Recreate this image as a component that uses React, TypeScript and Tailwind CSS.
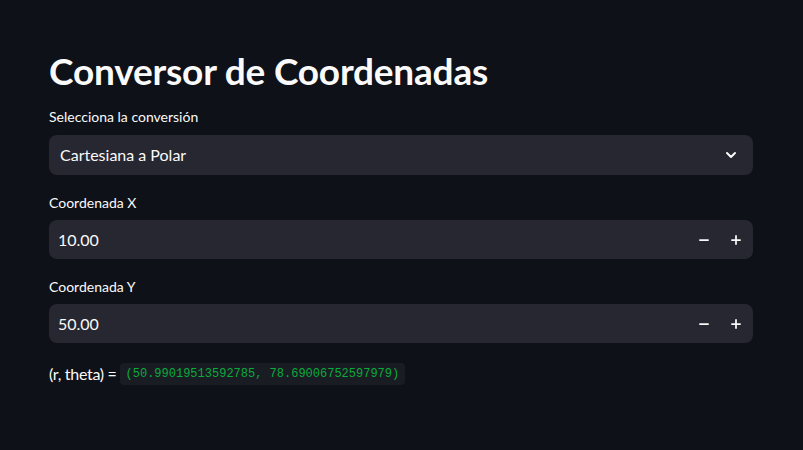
import { ChevronDown, Minus, Plus } from 'lucide-react'

const font = { fontFamily: 'Lato, "Noto Sans", sans-serif' }

function NumberField({ label, value }: { label: string; value: string }) {
  return (
    <div className="flex flex-col">
      <label className="text-[14px] leading-[18px] text-[#fafafa] h-[26px]">{label}</label>
      <div className="flex items-center h-[39px] rounded-lg bg-[#262730]">
        <span className="flex-1 pl-[9px] text-[16px] text-[#fafafa]">{value}</span>
        <button type="button" className="w-8 h-full flex items-center justify-center text-[#fafafa]">
          <Minus className="w-[14px] h-[14px]" strokeWidth={3} />
        </button>
        <button type="button" className="w-8 h-full flex items-center justify-center text-[#fafafa] mr-[1px]">
          <Plus className="w-[14px] h-[14px]" strokeWidth={3} />
        </button>
      </div>
    </div>
  )
}

export default function App() {
  return (
    <div className="w-[803px] h-[450px] bg-[#0e1117] overflow-hidden" style={font}>
      <div className="ml-[49px] mr-[50px] pt-[46px] flex flex-col">
        <h1 className="text-[37px] leading-[50px] font-bold text-[#fafafa] tracking-[-0.2px]">
          Conversor de Coordenadas
        </h1>

        <div className="mt-[12px] flex flex-col">
          <label className="text-[14px] leading-[18px] text-[#fafafa] h-[27px]">Selecciona la conversión</label>
          <div className="flex items-center h-[40px] rounded-lg bg-[#262730] pl-[11px] pr-[14px]">
            <span className="flex-1 text-[16px] text-[#fafafa]">Cartesiana a Polar</span>
            <ChevronDown className="w-[16px] h-[16px] text-[#fafafa]" strokeWidth={3} />
          </div>
        </div>

        <div className="mt-[19px]">
          <NumberField label="Coordenada X" value="10.00" />
        </div>
        <div className="mt-[19px]">
          <NumberField label="Coordenada Y" value="50.00" />
        </div>

        <div className="mt-[19px] flex items-center gap-[3px] text-[16px] text-[#fafafa]">
          <span className="tracking-[-0.3px]">(r, theta) =</span>
          <code
            className="px-[6px] py-[2px] rounded bg-[#1a1c24] text-[12px] text-[#09ab3b]"
            style={{ fontFamily: '"Liberation Mono", monospace' }}
          >
            (50.99019513592785, 78.69006752597979)
          </code>
        </div>
      </div>
    </div>
  )
}
